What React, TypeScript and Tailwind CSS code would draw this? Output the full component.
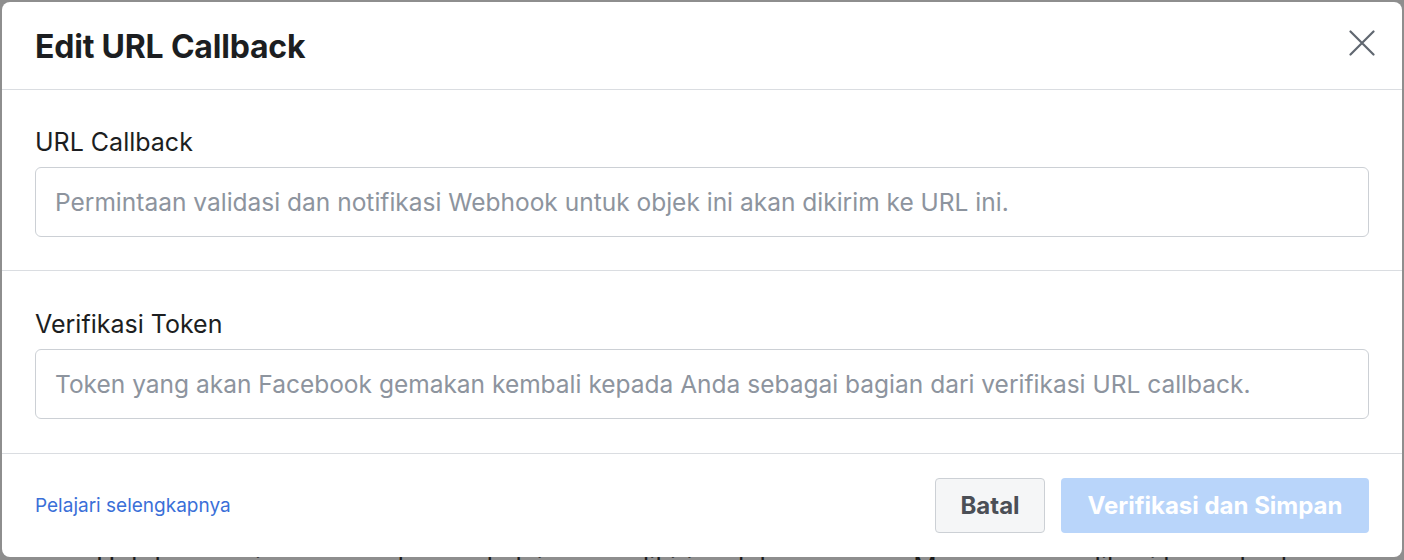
const Field = ({ label, placeholder, className }: { label: string; placeholder: string; className: string }) => {
  return (
    <div className={`border-b border-[#dadde1] px-[33px] ${className}`}>
      <label className="block text-[25px] leading-[33px] text-[#1c1e21]">{label}</label>
      <input
        className="mt-[8px] block h-[70px] w-full rounded-[6px] border border-[#ccd0d5] px-[19px] text-[24.5px] text-[#1c1e21] outline-none placeholder:text-[#8d949e]"
        placeholder={placeholder}
      />
    </div>
  );
};

export default function App() {
  return (
    <div className="h-[560px] w-[1404px] overflow-hidden bg-[#8e8e8e] p-[2px] font-['Inter',sans-serif]">
      <div className="relative z-10 flex h-[555px] flex-col rounded-[8px] bg-white">
        <div className="flex h-[88px] shrink-0 items-center justify-between border-b border-[#dadde1] pl-[33px] pr-[27px]">
          <h2 className="mt-[3px] text-[32px] font-bold tracking-[-0.2px] text-[#1c1e21]">Edit URL Callback</h2>
          <button aria-label="Tutup" className="mb-[6px] text-[#606770]">
            <svg width="26" height="26" viewBox="0 0 26 26" fill="none" stroke="currentColor" strokeWidth="2.2" strokeLinecap="round">
              <path d="M1.5 1.5 L24.5 24.5 M24.5 1.5 L1.5 24.5" />
            </svg>
          </button>
        </div>

        <Field
          className="pt-[36px] pb-[33px]"
          label="URL Callback"
          placeholder="Permintaan validasi dan notifikasi Webhook untuk objek ini akan dikirim ke URL ini."
        />
        <Field
          className="pt-[37px] pb-[34px]"
          label="Verifikasi Token"
          placeholder="Token yang akan Facebook gemakan kembali kepada Anda sebagai bagian dari verifikasi URL callback."
        />

        <div className="flex flex-1 items-center justify-between px-[33px]">
          <a href="#" className="mt-[2px] text-[19px] text-[#3a6fd8]">
            Pelajari selengkapnya
          </a>
          <div className="flex items-center gap-[16px]">
            <button className="h-[55px] w-[110px] rounded-[4px] border border-[#ccd0d5] bg-[#f5f6f7] text-[24px] font-bold text-[#4b4f56]">
              Batal
            </button>
            <button className="h-[55px] w-[308px] rounded-[4px] bg-[#b9d5fa] text-[24px] font-bold text-white">
              Verifikasi dan Simpan
            </button>
          </div>
        </div>
      </div>
      <p className="-mt-[4px] whitespace-nowrap pl-[94px] text-[26px] leading-none text-[#1a1a1a]">
        Untuk menerima pesan dan posts lain yang dikirim oleh pengguna Messenger, aplikasi harus berlangganan
      </p>
    </div>
  );
}
